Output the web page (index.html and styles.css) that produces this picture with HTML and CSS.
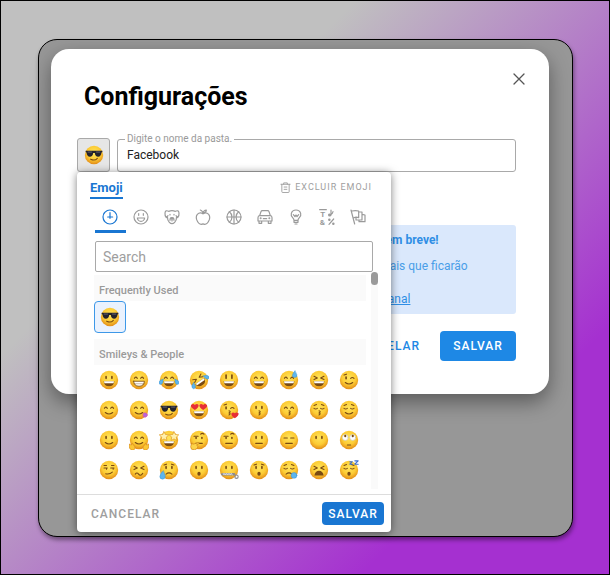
FILE: index.html
```html
<!DOCTYPE html>
<html lang="pt-BR">

<head>
    <meta charset="UTF-8">
    <meta name="viewport" content="width=device-width, initial-scale=1.0" />
    <title>Configurações</title>
    <link rel="stylesheet" href="styles.css">
</head>

<body>
    <!-- Shared gradient for the emoji faces -->
    <svg class="defs" aria-hidden="true">
        <defs>
            <radialGradient id="faceFill" cx="50%" cy="38%" r="62%">
                <stop offset="0" stop-color="#ffe45c" />
                <stop offset="0.6" stop-color="#fccb34" />
                <stop offset="1" stop-color="#e38d18" />
            </radialGradient>
        </defs>
    </svg>

    <main class="stage">
        <section class="modal" role="dialog" aria-labelledby="modalTitle">
            <button type="button" class="close" aria-label="Fechar">
                <svg viewBox="0 0 12 12"><path d="M1 1l10 10M11 1L1 11" /></svg>
            </button>

            <h1 id="modalTitle">Configurações</h1>

            <!-- Folder emoji and name -->
            <div class="field-row">
                <button type="button" class="emoji-trigger" data-emoji="sunglasses" aria-label="Escolher emoji"></button>
                <fieldset class="text-field">
                    <legend><label for="folderName">Digite o nome da pasta.</label></legend>
                    <input type="text" id="folderName" value="Facebook" />
                </fieldset>

                <!-- Emoji picker -->
                <div class="picker">
                    <div class="picker-head">
                        <button type="button" class="tab">Emoji</button>
                        <button type="button" class="remove">
                            <svg viewBox="0 0 12 12"><path d="M1 2.500h10M4 2.500V1h4v1.500M2 2.500v8q0 1 1 1h6q1 0 1-1v-8M4.500 5.500h3M4.500 8h3" /></svg>
                            EXCLUIR EMOJI
                        </button>
                    </div>

                    <div class="categories">
                        <button type="button" class="active" aria-label="Frequently Used">
                            <svg viewBox="0 0 24 24"><circle cx="12" cy="12" r="10.500" /><path d="M12 5.500V14M8.500 12H16" /></svg>
                        </button>
                        <button type="button" aria-label="Smileys &amp; People">
                            <svg viewBox="0 0 24 24"><circle cx="12" cy="12" r="10.500" /><path d="M8.500 7v2.500M15.500 7v2.500" /><path d="M6.500 13.500h11q-1 5-5.500 5t-5.500-5z" /></svg>
                        </button>
                        <button type="button" aria-label="Animals &amp; Nature">
                            <svg viewBox="0 0 24 24"><path d="M7 3.500Q2 1 1.500 6q-.5 4 2 7l2.500-3M17 3.500q5-2.500 5.500 2.500.5 4-2 7L18 10M7 3.500q5-2 10 0M5 11q0 6 3 9 4 4 8 0 3-3 3-9" /><path d="M9 8v1M15 8v1M9 17q0-4 3-4t3 4" /><path class="solid" d="M10.500 13.500h3L12 15z" /><path d="M12 15v3" /></svg>
                        </button>
                        <button type="button" aria-label="Food &amp; Drink">
                            <svg viewBox="0 0 24 24"><path d="M12 7Q7 4.500 3.500 8 1 11 2.500 16q2.500 7 7 7l2.500-.7 2.500.7q4.500 0 7-7Q23 11 20.500 8 17 4.500 12 7z" /><path d="M12 7q0-4-4-5.500M12 6q1-4 5-4.500 0 4-5 4.500z" /></svg>
                        </button>
                        <button type="button" aria-label="Activity">
                            <svg viewBox="0 0 24 24"><circle cx="12" cy="12" r="10.500" /><path d="M12 1.500v21M1.500 12h21M5 4q4 3 4 8t-4 8M19 4q-4 3-4 8t4 8" /></svg>
                        </button>
                        <button type="button" aria-label="Travel &amp; Places">
                            <svg viewBox="0 0 24 24"><path d="M4 10l2-6q.5-1.500 2-1.500h8q1.500 0 2 1.500l2 6M4 10h16q2.500 0 2.500 3v5h-21v-5q0-3 2.500-3zM3 18v3.500h4V18M17 18v3.500h4V18M9.500 14.500h5" /><circle cx="5.500" cy="14" r=".6" /><circle cx="18.500" cy="14" r=".6" /></svg>
                        </button>
                        <button type="button" aria-label="Objects">
                            <svg viewBox="0 0 24 24"><path d="M9 17q0-2-2-4-3-3-2-6.500Q6.500 1.500 12 1.500T19 6.500q1 3.500-2 6.500-2 2-2 4zM9 17v3h6v-3M10.500 22.500h3M8 8.500l2.500 3L12 9l1.500 2.500 2.500-3" /></svg>
                        </button>
                        <button type="button" aria-label="Symbols">
                            <svg viewBox="0 0 24 24"><path d="M1 1h10" /><text x="2" y="12">T</text><text x="1" y="24">&amp;</text><path d="M18 9V1.500M18 8q2 0 3-4" /><circle class="solid" cx="16" cy="9" r="1.500" /><path d="M22 15l-7 8" /><circle cx="15.500" cy="16" r="1" /><circle cx="21.500" cy="22" r="1" /></svg>
                        </button>
                        <button type="button" aria-label="Flags">
                            <svg viewBox="0 0 24 24"><path d="M1.500 1.500l5.500 21M3 3q5-1 10 0v10q-4-1.500-7 0M13 4.500h5v12H9v-3M18 8l4.500 1v10h-9v-2" /></svg>
                        </button>
                    </div>

                    <input type="search" class="search" placeholder="Search" aria-label="Search" />

                    <div class="results">
                        <div class="results-list">
                            <h2>Frequently Used</h2>
                            <div class="emoji-grid">
                                <button type="button" class="selected" data-emoji="sunglasses" aria-label="sunglasses"></button>
                            </div>
                            <h2>Smileys &amp; People</h2>
                            <div class="emoji-grid" id="smileys"></div>
                        </div>
                        <div class="scrollbar"><div class="thumb"></div></div>
                    </div>

                    <div class="picker-foot">
                        <button type="button" class="text-btn">CANCELAR</button>
                        <button type="button" class="save-btn">SALVAR</button>
                    </div>
                </div>
            </div>

            <!-- Notice -->
            <div class="notice">
                <p><strong>Novos recursos para organizar pastas disponíveis em breve!</strong></p>
                <p>Estamos preparando novas funcionalidades adicionais que ficarão</p>
                <p>Para acompanhar todas as novidades, siga <a href="#">nosso canal</a></p>
            </div>

            <div class="modal-actions">
                <button type="button" class="text-btn">CANCELAR</button>
                <button type="button" class="save-btn">SALVAR</button>
            </div>
        </section>
    </main>

    <script src="emojis.js"></script>
</body>

</html>
```

FILE: styles.css
```css
* {
    margin: 0;
    padding: 0;
    box-sizing: border-box;
}

body {
    display: flex;
    min-height: 100vh;
    padding: 38px 36px 37px 37px;
    border: 1px solid #000;
    background: linear-gradient(135deg, #c0c0c0 30%, #a530d0 79%);
    font-family: Roboto, sans-serif;
    font-size: 12px;
}

button,
input {
    font: inherit;
    border: none;
    background: none;
    outline: none;
}

button {
    cursor: pointer;
}

svg {
    display: block;
    fill: none;
    stroke: currentColor;
    stroke-linecap: round;
    stroke-linejoin: round;
}

.defs {
    position: absolute;
    width: 0;
    height: 0;
}

.stage {
    flex: 1;
    padding: 9px 23px 9px 12px;
    border: 1px solid #000;
    border-radius: 19px;
    background: #979797;
    box-shadow: 1px 3px 4px rgba(0, 0, 0, 0.4);
}

/* Modal */
.modal {
    position: relative;
    padding: 33px 33px 33px 26px;
    border-radius: 18px;
    background: #fff;
    box-shadow: 0 8px 20px rgba(0, 0, 0, 0.4);
}

.modal h1 {
    padding-left: 7px;
    font-size: 25px;
    line-height: 30px;
    font-weight: 700;
    color: #000;
}

.close {
    position: absolute;
    top: 24px;
    right: 24px;
    color: #555;
}

.close svg {
    width: 12px;
    height: 12px;
    stroke-width: 1.3;
}

.field-row {
    position: relative;
    display: flex;
    align-items: flex-end;
    gap: 7px;
    margin-top: 21px;
}

.emoji-trigger {
    display: flex;
    align-items: center;
    justify-content: center;
    width: 33px;
    height: 34px;
    border: 1px solid #a9a9a9;
    border-radius: 3px;
    background: #e6e6e6;
}

.text-field {
    flex: 1;
    height: 39px;
    padding: 0 7px;
    border: 1px solid #a9a9a9;
    border-radius: 3px;
}

.text-field legend {
    padding: 0 2px;
    font-size: 10px;
    line-height: 12px;
    color: #9a9a9a;
}

.text-field input {
    display: block;
    width: 100%;
    height: 20px;
    padding: 0 2px;
    color: #222;
}

.text-btn,
.save-btn {
    font-weight: 500;
    letter-spacing: 1px;
}

.save-btn {
    border-radius: 4px;
    color: #fff;
}

.notice {
    margin-top: 53px;
    padding: 8px 12px 7px 37px;
    border-radius: 3px;
    background: #dae8fc;
    color: #4a9ee8;
    line-height: 15px;
    white-space: nowrap;
}

.notice p + p {
    margin-top: 11px;
}

.notice p + p + p {
    margin-top: 18px;
}

.notice strong {
    color: #2f8ee5;
}

.notice a {
    color: #2f8ee5;
}

.modal-actions {
    display: flex;
    justify-content: flex-end;
    gap: 20px;
    margin-top: 17px;
}

.modal-actions .text-btn {
    color: #1e88e5;
}

.modal-actions .save-btn {
    width: 76px;
    height: 30px;
    background: #1e88e5;
}

/* Emoji picker */
.picker {
    position: absolute;
    top: 100%;
    left: 0;
    z-index: 1;
    width: 314px;
    border-radius: 4px;
    background: #fff;
    box-shadow: 0 1px 8px rgba(0, 0, 0, 0.5);
}

.picker-head {
    display: flex;
    align-items: flex-start;
    justify-content: space-between;
    padding: 7px 19px 0 13px;
}

.tab {
    border-bottom: 2px solid #1976d2;
    color: #1976d2;
    font-size: 13px;
    line-height: 18px;
    font-weight: 700;
}

.remove {
    display: flex;
    align-items: center;
    gap: 4px;
    color: #9e9e9e;
    font-size: 9px;
    line-height: 16px;
    letter-spacing: 1px;
}

.remove svg {
    width: 11px;
    height: 11px;
}

.categories {
    display: grid;
    grid-template-columns: repeat(9, 1fr);
    margin: 4px 18px 0;
}

.categories button {
    display: flex;
    justify-content: center;
    padding: 6px 0 5px;
    border-bottom: 3px solid transparent;
    color: #9a9a9a;
}

.categories .active {
    border-color: #1976d2;
    color: #1976d2;
}

.categories svg {
    width: 16px;
    height: 16px;
    stroke-width: 1.8;
}

.categories text {
    fill: currentColor;
    stroke: none;
    font-size: 12px;
    font-weight: 700;
}

.categories .solid {
    fill: currentColor;
}

.search {
    display: block;
    width: 278px;
    height: 31px;
    margin: 8px 18px 0;
    padding: 0 7px;
    border: 1px solid #a9a9a9;
    border-radius: 2px;
    font-size: 14px;
    appearance: none;
}

.search::placeholder {
    color: #9e9e9e;
}

.results {
    display: flex;
    gap: 5px;
    margin: 0 13px 0 17px;
}

.results-list {
    flex: 1;
    padding: 3px 0 4px;
}

.results h2 {
    padding: 6px 5px 0;
    background: #fafafa;
    color: #9a9a9a;
    font-size: 11px;
    line-height: 20px;
    font-weight: 500;
}

.emoji-grid {
    display: grid;
    grid-template-columns: repeat(9, 30px);
}

.emoji-grid button {
    display: flex;
    align-items: center;
    justify-content: center;
    height: 30px;
}

.emoji-grid .selected {
    width: 32px;
    height: 32px;
    margin-bottom: 6px;
    border: 1px solid #3d98e8;
    border-radius: 4px;
    background: #eaf2fe;
}

.emoji {
    width: 20px;
    height: 20px;
    color: #7a4a12;
    stroke-width: 1.3;
}

.scrollbar {
    width: 7px;
    background: #fafafa;
}

.thumb {
    height: 13px;
    border-radius: 4px;
    background: #9a9a9a;
}

.picker-foot {
    display: flex;
    align-items: center;
    justify-content: space-between;
    height: 38px;
    margin-top: 5px;
    padding: 0 7px 0 14px;
    border-top: 1px solid #ddd;
}

.picker-foot .text-btn {
    color: #9e9e9e;
}

.picker-foot .save-btn {
    width: 62px;
    height: 23px;
    background: #1976d2;
}
```

FILE: emojis.js
```js
// Every face is drawn on a 24x24 grid
const face = '<circle cx="12" cy="12" r="11" fill="url(#faceFill)" stroke="none"/>';

const eyes = {
    dots: '<path d="M8.500 8v2M15.500 8v2" stroke-width="2"/>',
    tall: '<path d="M8.500 6v4M15.500 6v4" stroke-width="2"/>',
    happy: '<path d="M6.500 10q1.500-3 3.500 0M14 10q1.500-3 3.500 0"/>',
    closed: '<path d="M6 10q2 1.500 4 0M14 10q2 1.500 4 0M6 6.500l3-1M15 5.500l3 1"/>',
    flat: '<path d="M6 9.500h4M14 9.500h4"/>',
    tight: '<path d="M6 7.500l4 2-4 2M18 7.500l-4 2 4 2"/>',
    wink: '<path d="M8.500 8.500v2" stroke-width="2"/><path d="M14 10q2-2 4 0M6 6l3-1"/>',
    side: '<path d="M6 9.500h4M14 9.500h4M9 10v1M17 10v1M6 6.500h3M15 6.500h3"/>',
    rolling: '<g fill="#fff" stroke="#bbb" stroke-width=".6"><circle cx="7.500" cy="9" r="3.500"/><circle cx="16.500" cy="9" r="3.500"/></g><path d="M7.500 7v.5M16.500 7v.5" stroke-width="2.500"/>',
    raised: '<path d="M8.500 9v1M15.500 9v1" stroke-width="2"/><path d="M6 7.500h5M14 5q2-2 4 0"/>'
};

const mouths = {
    open: '<path d="M5.500 13.500h13q-.5 6-6.500 6t-6.500-6z" fill="#7a4a12" stroke="none"/><path d="M6 13.500h12l-.5 2.500h-11z" fill="#fff" stroke="none"/>',
    teeth: '<path d="M5.500 13.500h13q-.5 6-6.500 6t-6.500-6z" fill="#fff" stroke-width="1"/><path d="M6 16.500h12" stroke-width=".5"/>',
    smile: '<path d="M7.500 15q4.500 3.500 9 0"/>',
    flat: '<path d="M8 16h8"/>',
    smirk: '<path d="M8 16.500q5 1 8-2"/>',
    frown: '<path d="M8.500 17q3.500-3 7 0"/>',
    wavy: '<path d="M7.500 17q2-3 4 0t5-1"/>',
    kiss: '<path d="M12 13q3 1 0 2.500 3 1 0 2.500"/>',
    round: '<ellipse cx="12" cy="16.500" rx="2" ry="2.500" fill="#7a4a12" stroke="none"/>',
    moan: '<path d="M6.500 18.500q1-5.500 5.500-5.500t5.500 5.500z" fill="#7a4a12" stroke="none"/>'
};

const tear = 'fill="#5db5ee" stroke="#318fd2" stroke-width=".5"';

const extras = {
    shades: '<path d="M2 7h20v1.500l-1 .5q-.5 5-4 5t-4-4.500h-2Q10.500 14 7 14T3 9l-1-.5z" fill="#24232c" stroke="none"/><path d="M5 8.500h4M15 8.500h4" stroke="#6c6c7b" stroke-width="1"/>',
    joyTears: `<path d="M5 11q-5 1-5 4t3 2q2-1 2-6zM19 11q5 1 5 4t-3 2q-2-1-2-6z" ${tear}/>`,
    sweat: `<path d="M19 1q-3 4-3 6t3 2 2.500-3z" ${tear}/>`,
    tearLeft: `<path d="M5 13q-4 4-4 7t3.500 3 3-4z" ${tear}/>`,
    bubble: `<circle cx="18" cy="18.500" r="3.500" ${tear}/>`,
    tongue: '<path d="M17 16q2-1.500 4 0t1 3q-2 3-5 1z" fill="#b565dc" stroke="#e34f8b" stroke-width=".6"/>',
    hearts: '<path d="M7 12Q1 8.500 2.500 6 5 3.500 7 6q2.500-2.500 4.500 0Q12 9 7 12zM17 12q-5-3-4.500-6Q14.500 3.500 17 6q2-2.500 4.500 0 1.500 2.500-4.500 6z" fill="#e72e36" stroke="none"/>',
    heart: '<path d="M19 22q-5-3-4-6 2-2 4 0 2-2 4.500 0 .5 3-4.500 6z" fill="#e72e36" stroke="none"/>',
    hands: '<path d="M0 17l3 1 1-2 3 4q1 4-3 4t-4-7zM24 17l-3 1-1-2-3 4q-1 4 3 4t4-7z" fill="#fbc735" stroke="#d98a19" stroke-width=".8"/>',
    stars: '<path d="M6 2l1.700 3.300 4 .5-3 2.800.8 4L6 10.700l-3.500 1.900.8-4-3-2.800 4-.5zM18 2l1.700 3.300 4 .5-3 2.800.8 4-3.500-1.900-3.500 1.900.8-4-3-2.800 4-.5z" fill="#ffefac" stroke="#e09a22" stroke-width=".8"/>',
    thinkHand: '<path d="M3 16l2 1 7-2q1 1-1 2l-2 1q3 1 1 4-3 3-7 1-2-2 0-7z" fill="#fdd449" stroke="#cf8419" stroke-width=".8"/>',
    zip: '<path d="M4 17h14" stroke="#8b8b92" stroke-width="3"/><path d="M5 16l1 2 1-2 1 2 1-2 1 2 1-2 1 2 1-2 1 2 1-2 1 2" stroke="#eee" stroke-width=".8"/><circle cx="21" cy="20" r="2" stroke="#8b8b92"/>',
    zzz: '<path d="M13 2h3l-3 3h3M19 1h4l-4 4h4" stroke="#3d6fd1"/>',
    brows: '<path d="M6 6l3-1M15 5l3 1"/>'
};

const emojis = {
    grinning: eyes.dots + mouths.open,
    grin: eyes.happy + mouths.teeth,
    joy: eyes.happy + mouths.open + extras.joyTears,
    rofl: '<g transform="rotate(-35 12 12)">' + eyes.tight + mouths.open + extras.joyTears + '</g>',
    smiley: eyes.tall + mouths.open,
    smile: eyes.happy + mouths.open,
    sweat_smile: eyes.happy + mouths.open + extras.sweat,
    laughing: eyes.tight + mouths.open,
    wink: eyes.wink + mouths.smile,
    blush: eyes.happy + mouths.smile,
    yum: eyes.happy + mouths.smile + extras.tongue,
    sunglasses: extras.shades + '<path d="M8 17q5 2.500 8-1"/>',
    heart_eyes: extras.hearts + mouths.open,
    kissing_heart: eyes.wink + mouths.kiss + extras.heart,
    kissing: eyes.dots + mouths.kiss,
    kissing_smiling_eyes: eyes.happy + mouths.kiss,
    kissing_closed_eyes: eyes.closed + mouths.kiss,
    relaxed: eyes.closed + mouths.smile,
    slightly_smiling: eyes.dots + mouths.smile,
    hugging: eyes.happy + mouths.smile + extras.hands,
    star_struck: mouths.open + extras.stars,
    thinking: eyes.raised + mouths.flat + extras.thinkHand,
    raised_eyebrow: eyes.raised + mouths.flat,
    neutral: eyes.dots + mouths.flat,
    expressionless: eyes.flat + mouths.flat,
    no_mouth: eyes.dots,
    eye_roll: eyes.rolling + '<path d="M10 18h4"/>',
    smirk: eyes.side + mouths.smirk,
    persevere: eyes.tight + mouths.wavy,
    disappointed_relieved: eyes.dots + extras.brows + mouths.frown + extras.tearLeft,
    open_mouth: eyes.dots + mouths.round,
    zipper_mouth: eyes.dots + extras.zip,
    hushed: eyes.dots + extras.brows + mouths.round,
    sleepy: eyes.closed + mouths.frown + extras.bubble,
    tired: eyes.tight + mouths.moan,
    sleeping: eyes.closed + mouths.round + extras.zzz
};

function drawEmoji(name) {
    return `<svg class="emoji" viewBox="0 0 24 24">${face}${emojis[name]}</svg>`;
}

document.getElementById('smileys').innerHTML = Object.keys(emojis)
    .map((name) => `<button type="button" aria-label="${name}">${drawEmoji(name)}</button>`)
    .join('');

document.querySelectorAll('[data-emoji]').forEach((el) => {
    el.innerHTML = drawEmoji(el.dataset.emoji);
});
```
